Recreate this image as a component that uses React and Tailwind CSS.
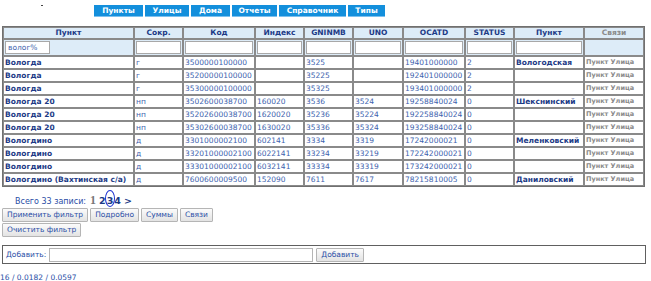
import React from "react";

const rows = [
  ["Вологда", "г", "", "3525", "", "2", "Вологодская"],
  ["Вологда", "г", "", "35225", "", "2", ""],
  ["Вологда", "г", "", "35325", "", "2", ""],
  ["Вологда 20", "нп", "160020", "3536", "3524", "0", "Шекснинский"],
  ["Вологда 20", "нп", "1620020", "35236", "35224", "0", ""],
  ["Вологда 20", "нп", "1630020", "35336", "35324", "0", ""],
  ["Вологдино", "д", "602141", "3334", "3319", "0", "Меленковский"],
  ["Вологдино", "д", "6022141", "33234", "33219", "0", ""],
  ["Вологдино", "д", "6032141", "33334", "33319", "0", ""],
  ["Вологдино (Вахтинская с/а)", "д", "152090", "7611", "7617", "0", "Даниловский"],
];

const codes = [
  "3500000100000", "35200000100000", "35300000100000", "3502600038700", "35202600038700",
  "35302600038700", "3301000002100", "33201000002100", "33301000002100", "7600600009500",
];
const ocatd = [
  "19401000000", "192401000000", "193401000000", "19258840024", "192258840024",
  "193258840024", "17242000021", "172242000021", "173242000021", "78215810005",
];

const widths = ["w-[131px]", "w-[49px]", "w-[72px]", "w-[49px]", "w-[49px]", "w-[50px]", "w-[62px]", "w-[49px]", "w-[70px]", "w-[60px]"];
const heads = ["Пункт", "Сокр.", "Код", "Индекс", "GNINMB", "UNO", "OCATD", "STATUS", "Пункт", "Связи"];
const tabs = [
  ["Пункты", "w-[49px]"],
  ["Улицы", "w-[44px]"],
  ["Дома", "w-[39px]"],
  ["Отчеты", "w-[45px]"],
  ["Справочник", "w-[67px]"],
  ["Типы", "w-[37px]"],
];

const td = "border border-[#8a8a8a] px-[1px] h-[13px] leading-[11px] whitespace-nowrap overflow-hidden text-[7.5px]";

function Btn({ children }) {
  return (
    <button className="h-[14px] px-[4px] border border-[#b5b5b5] bg-gradient-to-b from-[#fbfbfb] to-[#e3e3e3] text-[#2a4ea6] text-[7.5px] leading-[12px] rounded-[1px]">
      {children}
    </button>
  );
}

export default function App() {
  return (
    <div className="w-[651px] h-[281px] bg-white overflow-hidden relative text-[8px]" style={{ fontFamily: '"DejaVu Sans", Verdana, sans-serif' }}>
      <div className="absolute left-[41px] top-[5px] w-[2px] h-[1px] bg-[#444]" />
      <div className="flex gap-[2px] pl-[94px] pt-[5px] h-[26px]">
        {tabs.map(([t, w]) => (
          <div key={t} className={`${w} h-[12px] bg-[#138fdc] border-b border-[#7cc0ee] text-white font-bold text-[7.5px] leading-[11px] text-center`}>
            {t}
          </div>
        ))}
      </div>
      <table className="ml-[2px] border-separate border-spacing-0 border border-[#707070] table-fixed w-[641px]">
        <colgroup>
          {widths.map((w, i) => (
            <col key={i} className={w} />
          ))}
        </colgroup>
        <thead>
          <tr>
            {heads.map((h, i) => (
              <th key={i} className={`border border-[#8a8a8a] bg-[#ddecf8] h-[12px] leading-[10px] font-bold text-[7.5px] ${i === 9 ? "text-[#8a8a8a]" : "text-[#1c3a86]"}`}>
                {h}
              </th>
            ))}
          </tr>
          <tr>
            {heads.map((h, i) => (
              <td key={i} className="border border-[#8a8a8a] bg-[#ddecf8] h-[17px] px-[1px] py-0">
                {i === 9 ? null : (
                  <input
                    readOnly
                    defaultValue={i === 0 ? "волог%" : ""}
                    className={`block h-[13px] border border-[#a8a8a8] bg-white text-[7.5px] leading-[11px] text-[#3d5fae] px-[2px] ${i === 0 ? "w-[45px]" : "w-full"}`}
                  />
                )}
              </td>
            ))}
          </tr>
        </thead>
        <tbody>
          {rows.map((r, ri) => (
            <tr key={ri}>
              <td className={`${td} font-bold text-[#1c3a86]`}>{r[0]}</td>
              <td className={`${td} text-[#3d5fae]`}>{r[1]}</td>
              <td className={`${td} text-[#3d5fae]`}>{codes[ri]}</td>
              <td className={`${td} text-[#3d5fae]`}>{r[2]}</td>
              <td className={`${td} text-[#3d5fae]`}>{r[3]}</td>
              <td className={`${td} text-[#3d5fae]`}>{r[4]}</td>
              <td className={`${td} text-[#3d5fae]`}>{ocatd[ri]}</td>
              <td className={`${td} text-[#3d5fae]`}>{r[5]}</td>
              <td className={`${td} font-bold text-[#1c3a86]`}>{r[6]}</td>
              <td className={`${td} text-[#8a8a8a] font-bold !text-[6.5px]`}>Пункт Улица</td>
            </tr>
          ))}
        </tbody>
      </table>
      <div className="flex items-baseline pl-[15px] pt-[4px] h-[21px] relative">
        <span className="text-[#2a4ea6] text-[8px]">Всего 33 записи:</span>
        <span className="ml-[4px] text-[#777] font-bold text-[12px]" style={{ fontFamily: '"Liberation Serif", serif' }}>1</span>
        <span className="ml-[3px] text-[#1c3a86] font-bold text-[9.5px]">2</span>
        <span className="ml-[1px] text-[#1c3a86] font-bold text-[9.5px] relative">
          3
          <span className="absolute left-[-2px] top-[-4px] w-[10px] h-[17px] rounded-[50%] border border-[#1a2fd0]" />
        </span>
        <span className="ml-[1px] text-[#1c3a86] font-bold text-[9.5px]">4</span>
        <span className="ml-[3px] text-[#1c3a86] font-bold text-[9.5px]">&gt;</span>
      </div>
      <div className="pl-[2px] flex flex-col gap-[1px]">
        <div className="flex gap-[2px]">
          <Btn>Применить фильтр</Btn>
          <Btn>Подробно</Btn>
          <Btn>Суммы</Btn>
          <Btn>Связи</Btn>
        </div>
        <div className="flex">
          <Btn>Очистить фильтр</Btn>
        </div>
      </div>
      <div className="ml-[2px] mt-[8px] w-[644px] h-[19px] border border-[#606060] flex items-center pl-[3px] gap-[3px]">
        <span className="text-[#2a4ea6] text-[7.5px]">Добавить:</span>
        <input readOnly className="w-[264px] h-[14px] border border-[#b5b5b5] bg-white" />
        <Btn>Добавить</Btn>
      </div>
      <div className="mt-[8px] text-[#2a4ea6] text-[7.5px]">16 / 0.0182 / 0.0597</div>
    </div>
  );
}
